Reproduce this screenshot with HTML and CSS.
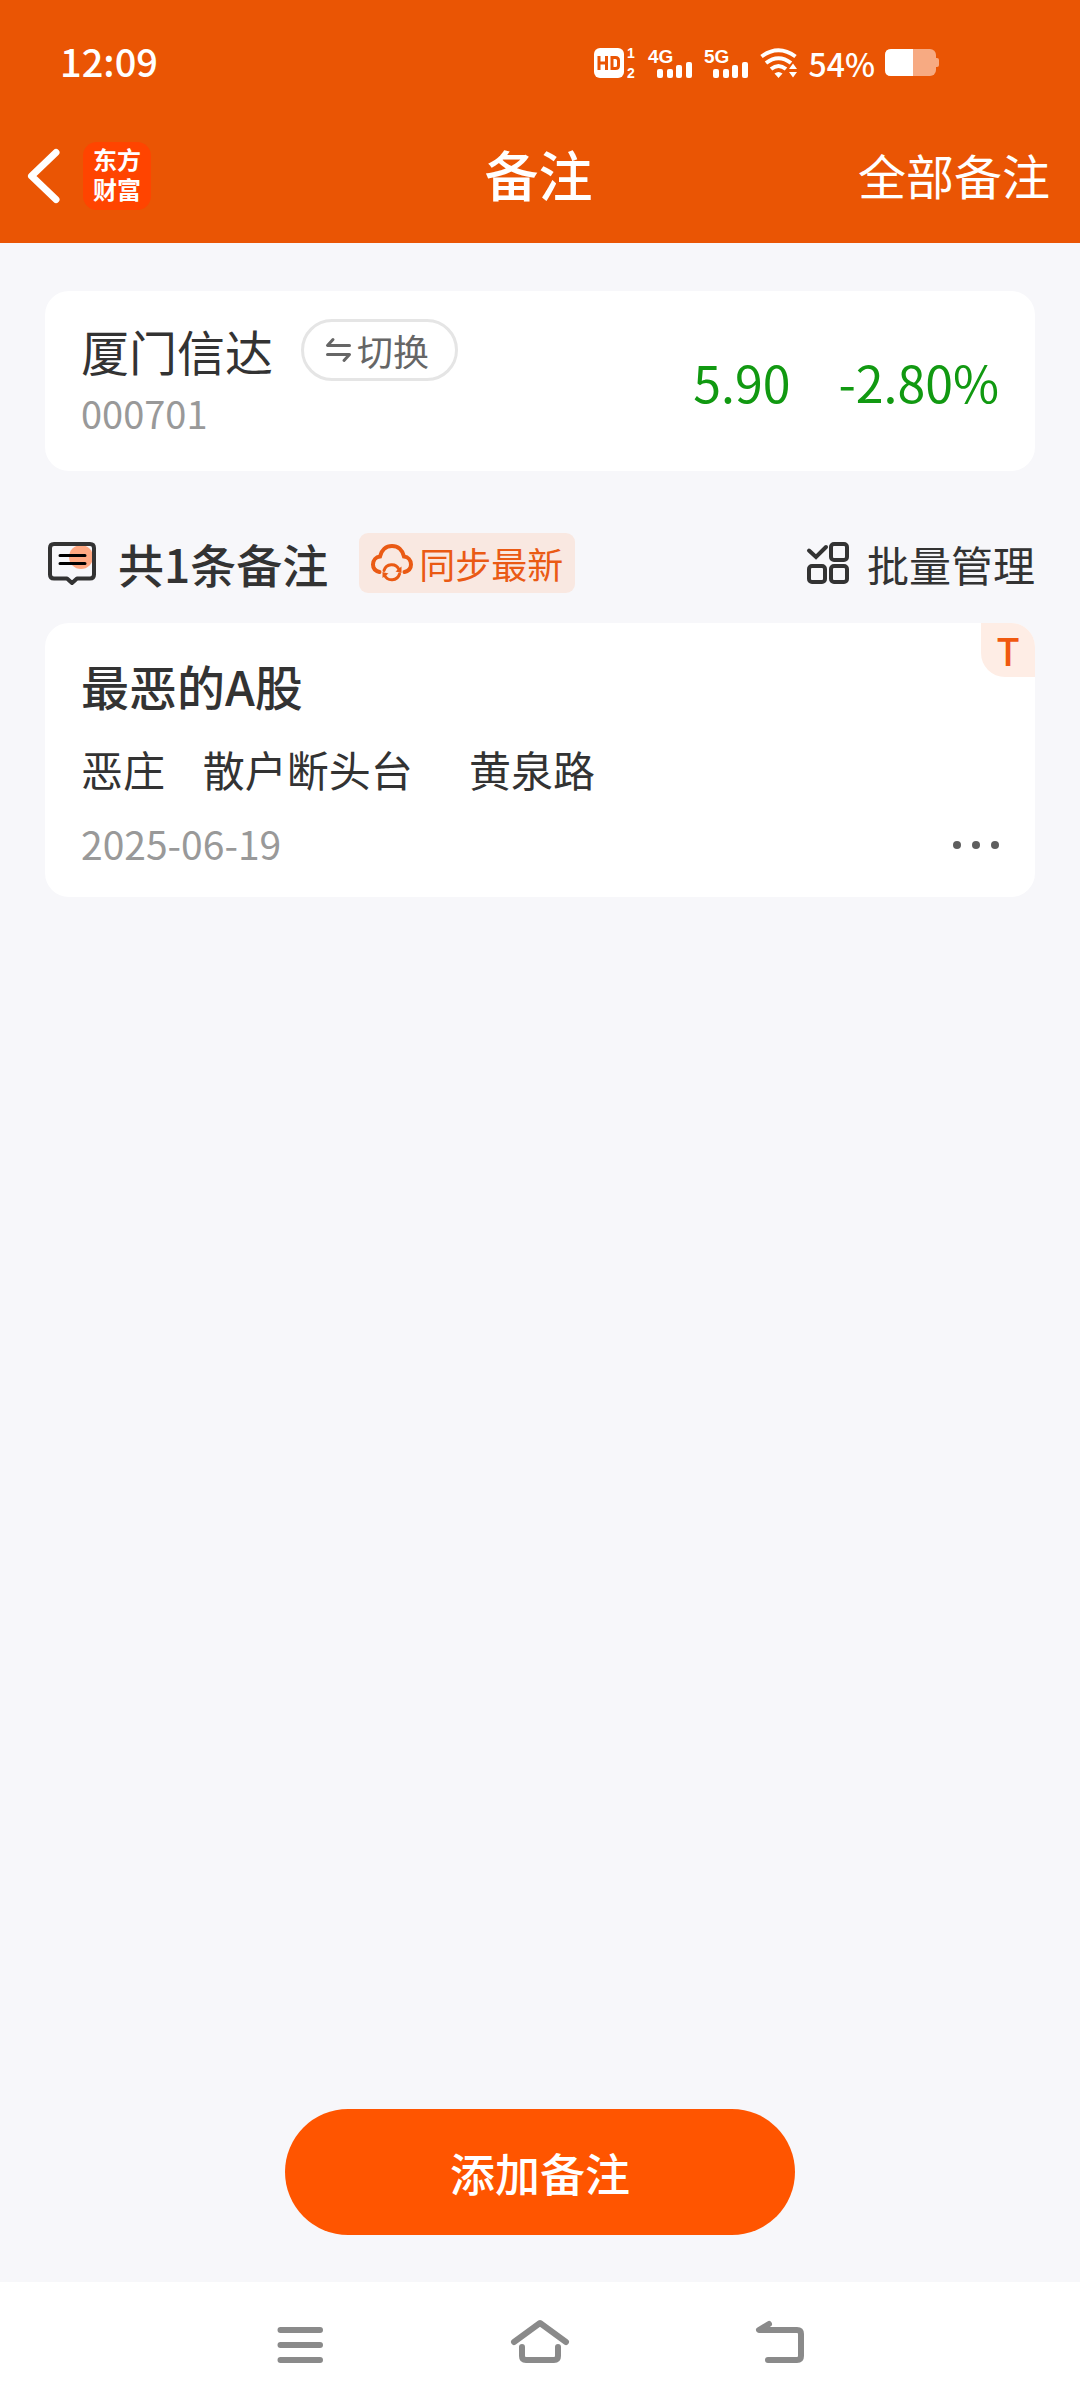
FILE: index.html
```html
<!DOCTYPE html>
<html lang="zh-CN">
<head>
<meta charset="utf-8">
<meta name="viewport" content="width=device-width, initial-scale=1">
<title>备注</title>
<link rel="stylesheet" href="styles.css">
</head>
<body>
<header class="top">
  <div class="status">
    <span class="clock">12:09</span>
    <div class="status-icons">
      <svg width="44" height="32" viewBox="0 0 44 32" aria-hidden="true">
        <rect x="0" y="1" width="30" height="30" rx="6" fill="#fff"/>
        <path d="M5 9V23M12.500 9V23M5 16H12.500M18 10.500H21.500Q24.500 10.500 24.500 13.500V18.500Q24.500 21.500 21.500 21.500H18Z" fill="none" stroke="#ea5504" stroke-width="3"/>
        <text x="33" y="11" class="tiny">1</text>
        <text x="33" y="31" class="tiny">2</text>
      </svg>
      <svg width="46" height="32" viewBox="0 0 46 32" aria-hidden="true">
        <text x="0" y="16" class="net">4G</text>
        <g fill="#fff"><rect x="9" y="22" width="6" height="9" rx="2"/><rect x="19" y="22" width="6" height="9" rx="2"/><rect x="28" y="18" width="6" height="13" rx="2"/><rect x="38" y="15" width="6" height="16" rx="2"/></g>
      </svg>
      <svg width="46" height="32" viewBox="0 0 46 32" aria-hidden="true">
        <text x="0" y="16" class="net">5G</text>
        <g fill="#fff"><rect x="9" y="22" width="6" height="9" rx="2"/><rect x="19" y="22" width="6" height="9" rx="2"/><rect x="28" y="18" width="6" height="13" rx="2"/><rect x="38" y="15" width="6" height="16" rx="2"/></g>
      </svg>
      <svg width="38" height="32" viewBox="0 0 38 32" aria-hidden="true">
        <g fill="none" stroke="#fff" stroke-width="4">
          <path d="M1.500 9.500Q18.500 -3 35.500 9.500"/>
          <path d="M6 16Q18.500 6.500 31 16"/>
          <path d="M11 22Q18.500 16 26 22"/>
        </g>
        <path d="M14.500 26.500Q18.500 23.500 22.500 26.500L18.500 31Z" fill="#fff"/>
        <path d="M29 22L33 16.500L37 22ZM29 25L33 30.500L37 25Z" fill="#fff"/>
      </svg>
      <span class="percent">54%</span>
      <svg width="54" height="28" viewBox="0 0 54 28" aria-hidden="true">
        <rect x="0" y="0" width="51" height="27" rx="6" fill="#f7aa82"/>
        <path d="M51 9H52Q54 9 54 11V16Q54 18 52 18H51Z" fill="#f7aa82"/>
        <path d="M28 0H6Q0 0 0 6V21Q0 27 6 27H28Z" fill="#fff"/>
      </svg>
    </div>
  </div>
  <nav class="title-bar">
    <div class="title-left">
      <button class="plain" type="button" aria-label="返回">
        <svg width="34" height="56" viewBox="0 0 34 56"><path d="M29 4.500L4.500 28L29 51.500" fill="none" stroke="#fff" stroke-width="7" stroke-linecap="round" stroke-linejoin="round"/></svg>
      </button>
      <span class="logo">东方<br>财富</span>
    </div>
    <h1 class="title">备注</h1>
    <a class="all-notes" href="#">全部备注</a>
  </nav>
</header>

<main class="content">
  <section class="card stock">
    <div class="stock-info">
      <div class="stock-name-row">
        <span class="stock-name">厦门信达</span>
        <button class="switch" type="button">
          <svg width="25" height="24" viewBox="0 0 25 24" aria-hidden="true"><path d="M7 1.500L1.500 7.500H23.500M1.500 16.500H23.500L18 22.500" fill="none" stroke="#666" stroke-width="3" stroke-linecap="round" stroke-linejoin="round"/></svg>切换
        </button>
      </div>
      <span class="stock-code">000701</span>
    </div>
    <div class="quote"><span>5.90</span><span>-2.80%</span></div>
  </section>

  <div class="list-head">
    <svg width="48" height="44" viewBox="0 0 48 44" aria-hidden="true">
      <circle cx="33" cy="16" r="12" fill="#ffa882"/>
      <path d="M6 3H42Q46 3 46 7V33.500Q46 37.500 42 37.500H29L24 42L19 37.500H6Q2 37.500 2 33.500V7Q2 3 6 3Z" fill="none" stroke="#333" stroke-width="4" stroke-linejoin="round"/>
      <path d="M12 14.500H37M12 22.500H37" stroke="#000" stroke-width="3" stroke-linecap="round"/>
    </svg>
    <h2 class="count">共1条备注</h2>
    <button class="sync" type="button">
      <svg width="42" height="38" viewBox="0 0 42 38" aria-hidden="true">
        <g fill="none" stroke="#ea5a14" stroke-linecap="round">
          <path d="M8.500 28C4.500 27 2 24 2 20.500C2 16 5 13 9 12.500C10.500 6 15 2 21 2C27 2 31.500 6 33 12.500C37 13 40 16 40 20.500C40 24 37.500 27 33.500 28" stroke-width="4"/>
          <path d="M13 26.500A8 8 0 0 1 28 25.500M28.500 30A8 8 0 0 1 13.500 31" stroke-width="3"/>
        </g>
        <path d="M30.500 22.500V29L24.500 27.500ZM11.500 34V28L17.500 29.500Z" fill="#ea5a14"/>
      </svg>同步最新
    </button>
    <button class="batch" type="button">
      <svg width="42" height="42" viewBox="0 0 42 42" aria-hidden="true">
        <g fill="none" stroke="#333" stroke-width="4">
          <path d="M2 8.500L9 15L19 5" stroke-linecap="round"/>
          <rect x="24" y="2" width="16" height="16" rx="3"/>
          <rect x="2" y="24" width="16" height="16" rx="3"/>
          <rect x="24" y="24" width="16" height="16" rx="3"/>
        </g>
      </svg>批量管理
    </button>
  </div>

  <article class="card note">
    <span class="badge">T</span>
    <h3 class="note-title">最恶的A股</h3>
    <p class="note-body">恶庄    散户断头台      黄泉路</p>
    <div class="note-foot">
      <time datetime="2025-06-19">2025-06-19</time>
      <button class="plain" type="button" aria-label="更多">
        <svg width="46" height="44" viewBox="0 0 46 44"><g fill="#5e5e5e"><circle cx="4" cy="24" r="4"/><circle cx="23" cy="24" r="4"/><circle cx="42" cy="24" r="4"/></g></svg>
      </button>
    </div>
  </article>
</main>

<footer class="action"><button class="add" type="button">添加备注</button></footer>

<nav class="system">
  <button class="plain" type="button" aria-label="菜单">
    <svg width="60" height="60" viewBox="0 0 60 60"><path d="M10.500 15H50M10.500 30H50M10.500 45H50"/></svg>
  </button>
  <button class="plain" type="button" aria-label="主屏幕">
    <svg width="60" height="60" viewBox="0 0 60 60"><path d="M4 27L30 8L56 27M12 32V41Q12 45 16 45H44Q48 45 48 41V32"/></svg>
  </button>
  <button class="plain" type="button" aria-label="后退">
    <svg width="60" height="60" viewBox="0 0 60 60"><path d="M19 9L9 15H47Q51 15 51 19V41Q51 45 47 45H18"/></svg>
  </button>
</nav>
</body>
</html>
```
FILE: styles.css
```css
* { box-sizing: border-box; }

body {
  margin: 0;
  min-height: 100vh;
  display: flex;
  flex-direction: column;
  background: #f7f7fa;
  color: #333;
  font-family: "Noto Sans CJK SC", sans-serif;
}

h1, h2, h3, p { margin: 0; font-weight: 500; }

svg { display: block; flex: none; overflow: visible; }

button {
  font: inherit;
  color: inherit;
  border: 0;
  padding: 0;
  background: none;
  display: flex;
  align-items: center;
  justify-content: center;
  white-space: nowrap;
}

/* Header */
.top { background: #ea5504; color: #fff; }

.status {
  height: 108px;
  padding: 18px 141px 0 60px;
  display: flex;
  align-items: center;
  justify-content: space-between;
}

.clock { padding-bottom: 4px; font-size: 38px; line-height: 44px; font-weight: 500; }

.status-icons { display: flex; align-items: center; gap: 10px; }

.tiny {
  font-family: "Liberation Sans", sans-serif;
  font-size: 14px;
  font-weight: 700;
  fill: #fff;
}

.net {
  font-family: "Liberation Sans", sans-serif;
  font-size: 19px;
  font-weight: 700;
  fill: #fff;
}

.percent { font-size: 32px; line-height: 44px; font-weight: 500; }

.title-bar {
  height: 135px;
  padding: 0 30px 0 27px;
  display: grid;
  grid-template-columns: 1fr auto 1fr;
  align-items: center;
}

.title-left { display: flex; align-items: center; gap: 22px; }

.logo {
  width: 68px;
  height: 68px;
  padding-top: 4px;
  border-radius: 14px;
  background: #ff4400;
  font-family: "Liberation Sans", "Noto Sans CJK SC", sans-serif;
  font-size: 24px;
  line-height: 30px;
  font-weight: 700;
  text-align: center;
}

.title { padding-bottom: 4px; font-size: 54px; line-height: 60px; }

.all-notes {
  justify-self: end;
  padding-bottom: 4px;
  color: inherit;
  text-decoration: none;
  font-size: 48px;
  line-height: 60px;
}

/* Content */
.content { flex: 1; padding: 48px 45px; }

.card { background: #fff; border-radius: 24px; }

.stock {
  padding: 28px 36px 36px;
  display: flex;
  align-items: center;
  justify-content: space-between;
}

.stock-info { display: flex; flex-direction: column; gap: 10px; }

.stock-name-row { display: flex; align-items: center; gap: 28px; }

.stock-name { font-size: 48px; line-height: 62px; }

.switch {
  height: 62px;
  padding: 0 26px 0 22px;
  gap: 6px;
  border: 3px solid #e5e5e5;
  border-radius: 31px;
  color: #666;
  font-size: 36px;
}

.stock-code { color: #999; font-size: 38px; line-height: 44px; }

.quote {
  display: flex;
  gap: 48px;
  padding-top: 8px;
  color: #119911;
  font-size: 50px;
  line-height: 60px;
}

.list-head {
  margin: 62px 0 30px;
  padding-left: 3px;
  height: 60px;
  display: flex;
  align-items: center;
}

.count { margin: 0 31px 0 22px; font-size: 46px; line-height: 60px; }

.sync {
  height: 60px;
  padding: 0 12px;
  gap: 6px;
  border-radius: 9px;
  background: #f9e8e1;
  color: #ea5a14;
  font-size: 36px;
}

.batch { margin-left: auto; gap: 18px; font-size: 42px; }

.note { position: relative; padding: 32px 36px; }

.badge {
  position: absolute;
  top: 0;
  right: 0;
  width: 54px;
  height: 54px;
  border-radius: 0 24px 0 24px;
  background: #feede5;
  color: #f0590f;
  font-size: 38px;
  line-height: 54px;
  font-weight: 500;
  text-align: center;
}

.note-title { font-size: 48px; line-height: 60px; }

.note-body {
  margin: 24px 0 22px;
  font-size: 42px;
  line-height: 60px;
  font-weight: 400;
  white-space: pre-wrap;
}

.note-foot {
  display: flex;
  align-items: center;
  justify-content: space-between;
  color: #999;
  font-size: 39px;
  line-height: 44px;
}

/* Bottom */
.action { padding: 0 45px 47px; display: flex; justify-content: center; }

.add {
  width: 510px;
  height: 126px;
  border-radius: 63px;
  background: #ff5500;
  color: #fff;
  font-size: 45px;
  font-weight: 500;
}

.system {
  height: 126px;
  display: flex;
  align-items: center;
  justify-content: center;
  gap: 180px;
  background: #fff;
}

.system path {
  fill: none;
  stroke: #8a8a8a;
  stroke-width: 6;
  stroke-linecap: round;
  stroke-linejoin: round;
}
```
